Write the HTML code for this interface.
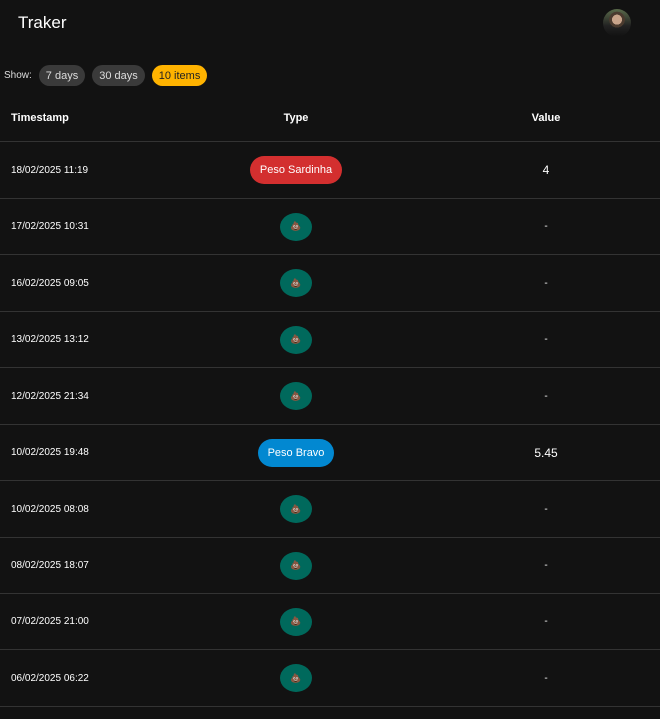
<!DOCTYPE html>
<html><head><style>
body{margin:0;background:#121212;width:660px;height:719px;overflow:hidden;font-family:"Liberation Sans",sans-serif;color:#fff;position:relative}
.title{position:absolute;left:18px;top:13px;font-size:17px;font-weight:500}
.av{position:absolute;left:603px;top:9px;width:28px;height:28px;border-radius:50%;background:radial-gradient(circle at 50% 38%,#c9a48a 0 22%,#4a3a2e 23% 35%,transparent 36%),linear-gradient(#5a6a4a,#222 60%,#111)}
.show{position:absolute;top:65px;left:4px;font-size:10px;color:#ddd;display:flex;align-items:center;gap:7px}
.chip{height:21px;display:flex;align-items:center;padding:0 7px;border-radius:11px;background:#3a3a3a;color:#ddd;font-size:11px}
.chip.y{background:#ffb300;color:#222}
.row{position:absolute;left:0;width:660px;border-bottom:1.5px solid #333;box-sizing:border-box}
.row>div{position:absolute;top:0;height:100%;display:flex;align-items:center}
.c1{left:11px;font-size:10px}
.c2{left:196px;width:200px;justify-content:center}
.c3{left:496px;width:100px;justify-content:center;font-size:10px}
.h div{font-size:11px;font-weight:bold}
.p{height:28px;display:flex;align-items:center;padding:0 10px;border-radius:14px;font-size:11px}
.r{background:#d32f2f}.b{background:#0288d1}
.e{width:32px;height:28px;border-radius:50%;background:#00695c;font-size:9px;display:flex;align-items:center;justify-content:center}
.v{font-size:12px}
</style></head><body>
<div class="title">Traker</div><div class="av"></div>
<div class="show">Show: <span class="chip">7 days</span><span class="chip">30 days</span><span class="chip y">10 items</span></div>
<div class="row h" style="top:94px;height:48px"><div class="c1">Timestamp</div><div class="c2">Type</div><div class="c3">Value</div></div>
<div class="row" style="top:142px;height:57px"><div class="c1">18/02/2025 11:19</div><div class="c2"><span class="p r">Peso Sardinha</span></div><div class="c3 v">4</div></div>
<div class="row" style="top:199px;height:56px"><div class="c1">17/02/2025 10:31</div><div class="c2"><span class="e">💩</span></div><div class="c3">-</div></div>
<div class="row" style="top:255px;height:57px"><div class="c1">16/02/2025 09:05</div><div class="c2"><span class="e">💩</span></div><div class="c3">-</div></div>
<div class="row" style="top:312px;height:56px"><div class="c1">13/02/2025 13:12</div><div class="c2"><span class="e">💩</span></div><div class="c3">-</div></div>
<div class="row" style="top:368px;height:57px"><div class="c1">12/02/2025 21:34</div><div class="c2"><span class="e">💩</span></div><div class="c3">-</div></div>
<div class="row" style="top:425px;height:56px"><div class="c1">10/02/2025 19:48</div><div class="c2"><span class="p b">Peso Bravo</span></div><div class="c3 v">5.45</div></div>
<div class="row" style="top:481px;height:57px"><div class="c1">10/02/2025 08:08</div><div class="c2"><span class="e">💩</span></div><div class="c3">-</div></div>
<div class="row" style="top:538px;height:56px"><div class="c1">08/02/2025 18:07</div><div class="c2"><span class="e">💩</span></div><div class="c3">-</div></div>
<div class="row" style="top:594px;height:56px"><div class="c1">07/02/2025 21:00</div><div class="c2"><span class="e">💩</span></div><div class="c3">-</div></div>
<div class="row" style="top:650px;height:57px"><div class="c1">06/02/2025 06:22</div><div class="c2"><span class="e">💩</span></div><div class="c3">-</div></div>
</body></html>
